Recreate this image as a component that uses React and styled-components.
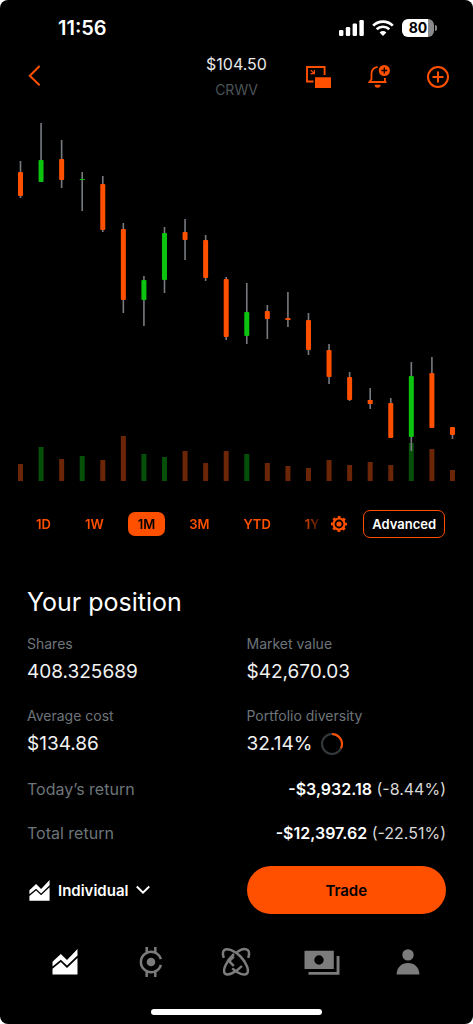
import React, { useState } from 'react';
import styled, { createGlobalStyle } from 'styled-components';

const ORANGE = '#ff5000';
const GREEN = '#0cc30f';

const GlobalStyle = createGlobalStyle`
  * {
    box-sizing: border-box;
  }
  body {
    margin: 0;
    background: #fff;
    font-family: Inter, 'Liberation Sans', sans-serif;
  }
  button {
    margin: 0;
    padding: 0;
    border: 0;
    background: none;
    color: inherit;
    font: inherit;
    cursor: pointer;
  }
  svg {
    display: block;
  }
  h1, h2, p, dl, dt, dd {
    margin: 0;
    font-weight: 400;
  }
`;

const Screen = styled.div`
  display: flex;
  flex-direction: column;
  min-height: 100vh;
  background: #000;
  color: #fff;
  border-radius: 8px;
  overflow: hidden;
`;

const StatusBar = styled.div`
  display: flex;
  align-items: center;
  justify-content: space-between;
  height: 52px;
  padding: 4px 36px 0 58px;
`;

const Clock = styled.time`
  font-size: 20px;
  font-weight: 600;
`;

const StatusIcons = styled.div`
  display: flex;
  align-items: center;
  gap: 8px;
`;

const Battery = styled.div`
  display: flex;
  align-items: center;
  gap: 1px;
  &::after {
    content: '';
    width: 2px;
    height: 6px;
    background: #8a8a8a;
    border-radius: 0 2px 2px 0;
  }
`;

const BatteryLevel = styled.span`
  width: 32px;
  height: 18px;
  border-radius: 6px;
  background: linear-gradient(90deg, #fff 80%, #8a8a8a 80%);
  color: #000;
  font-size: 14px;
  line-height: 18px;
  font-weight: 700;
  text-align: center;
`;

const Header = styled.header`
  display: grid;
  grid-template-columns: 1fr auto 1fr;
  align-items: center;
  padding: 0 22px 4px;
  color: ${ORANGE};
`;

const IconButton = styled.button`
  width: 26px;
  height: 26px;
`;

const HeaderActions = styled.div`
  display: flex;
  justify-content: flex-end;
  gap: 34px;
`;

const Quote = styled.div`
  line-height: 25px;
  text-align: center;
`;

const Price = styled.h1`
  color: #e8e8e8;
  font-size: 16px;
`;

const Ticker = styled.p`
  color: #4b5358;
  font-size: 14px;
`;

const Chart = styled.svg`
  width: 100%;
  height: auto;
`;

const RangeBar = styled.div`
  display: flex;
  align-items: center;
  height: 68px;
  padding: 0 28px 0 26px;
`;

const Ranges = styled.div`
  display: flex;
  flex: 1;
  gap: 14px;
  min-width: 0;
  overflow: hidden;
  mask-image: linear-gradient(90deg, #000 calc(100% - 20px), transparent);
`;

const RangeButton = styled.button`
  flex: none;
  padding: 0 10px;
  border-radius: 7px;
  background: ${(p) => (p.$active ? ORANGE : 'none')};
  color: ${(p) => (p.$active ? '#000' : ORANGE)};
  font-size: 13px;
  line-height: 24px;
  font-weight: 600;
`;

const SettingsButton = styled.button`
  margin: 0 16px 0 8px;
`;

const AdvancedButton = styled.button`
  height: 28px;
  padding: 0 8px;
  border: 1px solid ${ORANGE};
  border-radius: 7px;
  font-size: 13px;
  font-weight: 600;
`;

const Position = styled.section`
  padding: 26px 27px 0;
`;

const Title = styled.h2`
  font-size: 25px;
  line-height: 36px;
`;

const Stats = styled.dl`
  display: grid;
  grid-template-columns: 1fr 1fr;
  gap: 16px 20px;
  margin-top: 12px;
`;

const Label = styled.dt`
  color: #6d757a;
  font-size: 14px;
  line-height: 24px;
`;

const Value = styled.dd`
  display: flex;
  align-items: center;
  gap: 8px;
  font-size: 19px;
  line-height: 32px;
  color: #f2f2f2;
`;

const Returns = styled.dl`
  margin-top: 7px;
`;

const ReturnRow = styled.div`
  display: flex;
  align-items: center;
  justify-content: space-between;
  height: 44px;
  font-size: 16px;
`;

const ReturnLabel = styled.dt`
  color: #6d757a;
`;

const ReturnValue = styled.dd`
  color: #d8d8d8;
  b {
    color: #fff;
    font-weight: 600;
  }
`;

const Actions = styled.div`
  display: grid;
  grid-template-columns: 1fr 1fr;
  gap: 20px;
  align-items: center;
  padding: 11px 27px 0;
`;

const AccountButton = styled.button`
  display: flex;
  align-items: center;
  gap: 8px;
  padding-left: 2px;
  font-size: 15px;
  font-weight: 600;
`;

const TradeButton = styled.button`
  height: 48px;
  border-radius: 24px;
  background: ${ORANGE};
  color: #000;
  font-size: 15px;
  font-weight: 600;
`;

const TabBar = styled.nav`
  display: flex;
  padding: 29px 22px 0;
`;

const Tab = styled.button`
  display: flex;
  flex: 1;
  align-items: center;
  justify-content: center;
  padding: 4px 0;
  color: ${(p) => (p.$active ? '#fff' : '#7c7c7c')};
`;

const HomeIndicator = styled.div`
  width: 36%;
  height: 6px;
  margin: auto auto 9px;
  border-radius: 3px;
  background: #fff;
`;

// [high, body top, body bottom, low, volume top, up]
const candles = [
  [161, 172, 196, 198, 464, false],
  [123, 160, 182, 182, 447, true],
  [140, 159, 180, 188, 459, false],
  [172, 179, 180, 211, 456, true],
  [176, 184, 230, 232, 460, false],
  [223, 229, 300, 313, 436, false],
  [276, 280, 300, 326, 454, true],
  [227, 233, 280, 293, 457, true],
  [219, 232, 240, 260, 451, false],
  [235, 240, 278, 281, 463, false],
  [277, 279, 337, 340, 451, false],
  [283, 312, 336, 344, 454, true],
  [305, 311, 319, 339, 463, false],
  [292, 318, 320, 327, 466, false],
  [313, 320, 350, 355, 468, false],
  [344, 350, 377, 384, 460, false],
  [372, 377, 400, 401, 465, false],
  [388, 400, 404, 409, 462, false],
  [398, 403, 438, 438, 465, false],
  [362, 376, 437, 451, 443, true],
  [357, 373, 428, 428, 449, false],
  [427, 427, 435, 439, 470, false],
];

const CandleChart = () => (
  <Chart viewBox="0 106 473 384" role="img" aria-label="CRWV price, 1 month">
    {candles.map(([high, top, bottom, low, volume, up], i) => {
      const x = 20.5 + i * 20.57;
      const color = up ? GREEN : ORANGE;
      return (
        <g key={i}>
          <rect x={x - 2.5} y={volume} width="5" height={481 - volume} fill={up ? '#064f08' : '#6b2607'} />
          <rect x={x - 0.8} y={high} width="1.6" height={low - high} fill="#777b80" />
          <rect x={x - 2.5} y={top} width="5" height={bottom - top} rx={bottom - top > 4 ? 1 : 0} fill={color} />
        </g>
      );
    })}
  </Chart>
);

const SignalIcon = () => (
  <svg width="25" height="16" viewBox="0 0 25 16" fill="#fff">
    <rect x="0" y="10" width="4.4" height="6" rx="1.2" />
    <rect x="6.8" y="7" width="4.4" height="9" rx="1.2" />
    <rect x="13.6" y="3.6" width="4.4" height="12.4" rx="1.2" />
    <rect x="20.4" y="0" width="4.4" height="16" rx="1.2" />
  </svg>
);

const WifiIcon = () => (
  <svg width="22" height="16" viewBox="0 0 22 16" fill="none" stroke="#fff" strokeWidth="2.7">
    <path d="M1.2 5.6a14 14 0 0 1 19.6 0" />
    <path d="M4.7 9.3a9 9 0 0 1 12.6 0" />
    <path d="M11 16l-3.4-3.6a4.9 4.9 0 0 1 6.8 0z" fill="#fff" stroke="none" />
  </svg>
);

const BackIcon = () => (
  <svg width="26" height="26" viewBox="0 0 26 26" fill="none" stroke="currentColor" strokeWidth="2">
    <path d="M17.6 2 7.8 11.7l9.8 9.6" />
  </svg>
);

const PipIcon = () => (
  <svg width="26" height="26" viewBox="0 0 26 26" fill="none" stroke="currentColor" strokeWidth="1.9">
    <path d="M8.5 17.5H2V3h17.6v8" />
    <path d="M5.8 6.2 9 9.4M9.3 6v3.7H5.6" strokeWidth="1.2" />
    <path d="M10 13.3h16V24H10z" fill="currentColor" stroke="none" />
  </svg>
);

const BellIcon = () => (
  <svg width="26" height="26" viewBox="0 0 26 26" fill="none" stroke="currentColor" strokeWidth="1.8">
    <path d="M12.6 2.9C8.7 3.6 6.5 6.4 6.5 10v5.200L4.500 18h16.900M19.900 14v4" />
    <circle cx="19.300" cy="6.500" r="5.600" fill="currentColor" stroke="none" />
    <path d="M19.300 3.600v5.800M16.400 6.500h5.800" stroke="#000" strokeWidth="1.300" />
    <path d="M9.600 20.800h6a3 3 0 0 1-6 0z" fill="currentColor" stroke="none" />
  </svg>
);

const PlusIcon = () => (
  <svg width="26" height="26" viewBox="0 0 26 26" fill="none" stroke="currentColor" strokeWidth="2">
    <circle cx="13" cy="13" r="10" />
    <path d="M13 7.500v11M7.500 13h11" />
  </svg>
);

const GearIcon = () => (
  <svg width="16" height="16" viewBox="0 0 16 16" fill="none" stroke={ORANGE}>
    <circle cx="8" cy="8" r="5.500" strokeWidth="2.200" />
    <circle cx="8" cy="8" r="7" strokeWidth="2" strokeDasharray="2.800 2.698" strokeDashoffset="1.400" />
    <circle cx="8" cy="8" r="2.600" fill={ORANGE} stroke="none" />
  </svg>
);

const DiversityRing = () => (
  <svg width="24" height="24" viewBox="0 0 24 24" fill="none" strokeWidth="2">
    <circle cx="12" cy="12" r="10" stroke="#343a3d" />
    <circle
      cx="12"
      cy="12"
      r="10"
      stroke={ORANGE}
      pathLength="100"
      strokeDasharray="32.14 67.86"
      transform="rotate(-90 12 12)"
    />
  </svg>
);

const InvestingIcon = ({ size = 26 }) => (
  <svg width={size} height={size} viewBox="0 0 26 26" fill="currentColor">
    <path d="M.5 12.700 8.800 5l6.200 6L25.500 0v6.500L15 16.600 8.800 10.700.500 17.600z" />
    <path d="M.5 19.700 8.800 13l6.200 6L25.500 9v16.600H.5z" />
  </svg>
);

const CryptoIcon = () => (
  <svg width="30" height="30" viewBox="0 0 30 30" fill="none" stroke="currentColor" strokeWidth="2.500">
    <path d="M24.900 12.200a10.200 10.200 0 1 0 0 5.600" />
    <path d="M10.700 0v6.200M19.300 0v6.200M10.700 23.800V30M19.300 23.800V30" />
    <circle cx="15" cy="15" r="4.300" fill="currentColor" stroke="none" />
  </svg>
);

const AtomIcon = () => (
  <svg width="30" height="30" viewBox="0 0 30 30" fill="none" stroke="currentColor" strokeWidth="2.500">
    <path d="M2.800 10.800C1.500 7.200 1.700 4.600 3.200 3.200 6 .6 13.500 3.400 19.500 9.500s9 14.200 6.500 17c-2.500 2.400-9 .2-14.800-5.200" />
    <path d="M27.200 10.800c1.300-3.600 1.100-6.200-.4-7.600-2.200-2-6.600-1-11 2" />
    <path d="M13 7C5.200 14 1.300 23.600 3.900 26.500c2.700 2.500 10.600-.6 17-7.500" />
    <path d="m12.800 9.600-4.600 4.600 4.600 4.800" />
  </svg>
);

const CashIcon = () => (
  <svg width="36" height="26" viewBox="0 0 36 26" fill="currentColor">
    <path fillRule="evenodd" d="M.5 1.700h29.300V20H.5zM15 6.300a4.700 4.700 0 1 0 0 9.400 4.700 4.700 0 0 0 0-9.400z" />
    <path d="M32.600 7h2.900v18.800h-31V23h28.100z" />
  </svg>
);

const PersonIcon = () => (
  <svg width="26" height="26" viewBox="0 0 26 26" fill="currentColor">
    <circle cx="13" cy="5.900" r="5.700" />
    <path d="M1.600 25.500C1.600 18.700 6.500 14 13 14s11.400 4.700 11.400 11.500z" />
  </svg>
);

const stats = [
  { label: 'Shares', value: '408.325689' },
  { label: 'Market value', value: '$42,670.03' },
  { label: 'Average cost', value: '$134.86' },
  { label: 'Portfolio diversity', value: '32.14%', ring: true },
];

const returns = [
  { label: 'Today’s return', amount: '-$3,932.18', percent: '(-8.44%)' },
  { label: 'Total return', amount: '-$12,397.62', percent: '(-22.51%)' },
];

const tabs = [
  { name: 'Investing', Icon: InvestingIcon },
  { name: 'Crypto', Icon: CryptoIcon },
  { name: 'Discover', Icon: AtomIcon },
  { name: 'Cash', Icon: CashIcon },
  { name: 'Account', Icon: PersonIcon },
];

const App = () => {
  const [range, setRange] = useState('1M');
  const [tab, setTab] = useState('Investing');

  return (
    <>
      <GlobalStyle />
      <Screen>
        <StatusBar>
          <Clock>11:56</Clock>
          <StatusIcons>
            <SignalIcon />
            <WifiIcon />
            <Battery>
              <BatteryLevel>80</BatteryLevel>
            </Battery>
          </StatusIcons>
        </StatusBar>

        <Header>
          <IconButton aria-label="Back"><BackIcon /></IconButton>
          <Quote>
            <Price>$104.50</Price>
            <Ticker>CRWV</Ticker>
          </Quote>
          <HeaderActions>
            <IconButton aria-label="Picture in picture"><PipIcon /></IconButton>
            <IconButton aria-label="Add alert"><BellIcon /></IconButton>
            <IconButton aria-label="Add to list"><PlusIcon /></IconButton>
          </HeaderActions>
        </Header>

        <CandleChart />

        <RangeBar>
          <Ranges>
            {['1D', '1W', '1M', '3M', 'YTD', '1Y'].map((r) => (
              <RangeButton key={r} $active={r === range} onClick={() => setRange(r)}>
                {r}
              </RangeButton>
            ))}
          </Ranges>
          <SettingsButton aria-label="Chart settings"><GearIcon /></SettingsButton>
          <AdvancedButton>Advanced</AdvancedButton>
        </RangeBar>

        <Position>
          <Title>Your position</Title>
          <Stats>
            {stats.map((s) => (
              <div key={s.label}>
                <Label>{s.label}</Label>
                <Value>
                  {s.value}
                  {s.ring && <DiversityRing />}
                </Value>
              </div>
            ))}
          </Stats>
          <Returns>
            {returns.map((r) => (
              <ReturnRow key={r.label}>
                <ReturnLabel>{r.label}</ReturnLabel>
                <ReturnValue>
                  <b>{r.amount}</b> {r.percent}
                </ReturnValue>
              </ReturnRow>
            ))}
          </Returns>
        </Position>

        <Actions>
          <AccountButton>
            <InvestingIcon size={21} />
            Individual
            <svg width="14" height="10" viewBox="0 0 14 10" fill="none" stroke="currentColor" strokeWidth="2">
              <path d="m.8 1.500 6.200 6.200 6.200-6.200" />
            </svg>
          </AccountButton>
          <TradeButton>Trade</TradeButton>
        </Actions>

        <TabBar>
          {tabs.map(({ name, Icon }) => (
            <Tab key={name} aria-label={name} $active={name === tab} onClick={() => setTab(name)}>
              <Icon />
            </Tab>
          ))}
        </TabBar>
        <HomeIndicator />
      </Screen>
    </>
  );
};

export default App;
